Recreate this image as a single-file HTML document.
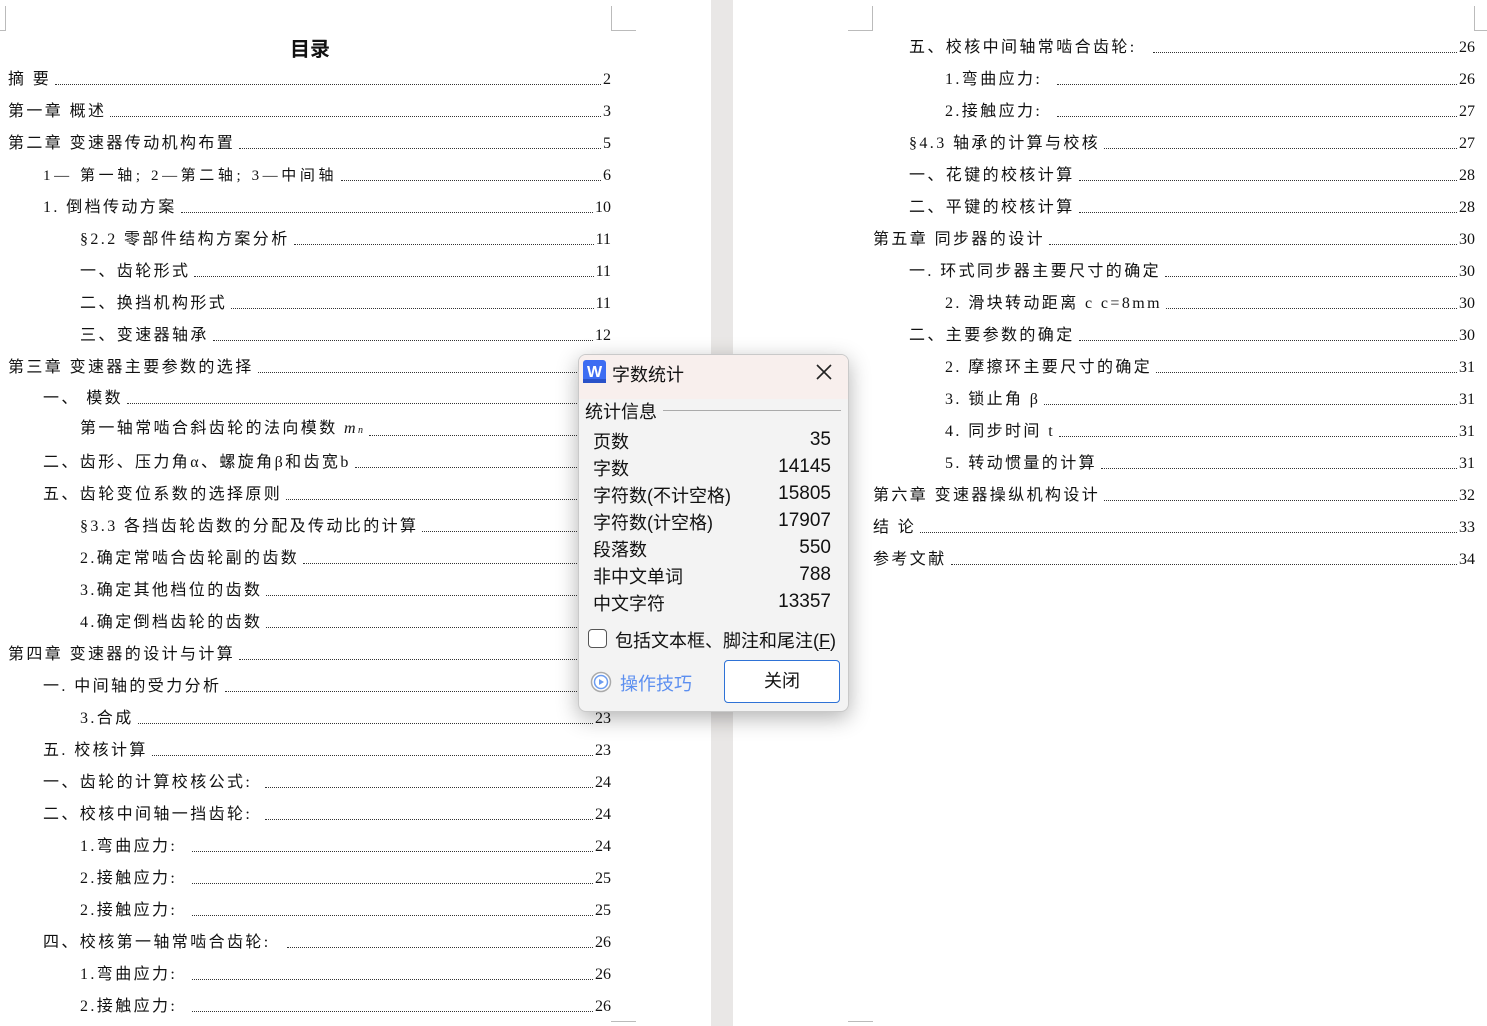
<!DOCTYPE html>
<html><head><meta charset="utf-8"><style>
*{margin:0;padding:0;box-sizing:border-box}
body{width:1487px;height:1026px;overflow:hidden;background:#fff;position:relative;font-family:"Liberation Serif","Noto Sans CJK SC",sans-serif;color:#111}
.gap{position:absolute;left:711px;top:0;width:22px;height:1026px;background:#e9e7e6}
.r{position:absolute;height:20px;display:flex;align-items:flex-end;font-size:16px;letter-spacing:2.4px;line-height:20px;white-space:nowrap;margin-top:2px}
.r .t{font-family:"Liberation Serif","Noto Sans CJK SC",sans-serif}
.r .d{flex:1;border-bottom:1px dotted #333;margin:0 2px 5px 4px}
.r .n{letter-spacing:0;font-family:"Liberation Serif",serif}
.mk{position:absolute;background:#bbb}
.title{position:absolute;left:270px;top:33px;width:80px;text-align:center;font-size:20px;font-weight:bold;font-family:"Noto Sans CJK SC",sans-serif}
.dlg{position:absolute;left:578px;top:354px;width:271px;height:358px;background:#f3f3f3;border:1px solid #c9c9c9;border-radius:8px;box-shadow:0 6px 22px rgba(0,0,0,.3);font-family:"Liberation Sans","Noto Sans CJK SC",sans-serif;overflow:hidden}
.tb{height:44px;background:#f8efed;position:relative}
.a{position:absolute;font-size:18px;color:#111;white-space:nowrap}
.v{position:absolute;right:17px;font-size:19px;margin-top:1px}
</style></head><body>
<div class="gap"></div>
<div class="mk" style="left:5px;top:6px;width:1px;height:24px"></div>
<div class="mk" style="left:0;top:30px;width:6px;height:1px"></div>
<div class="mk" style="left:611px;top:6px;width:1px;height:24px"></div>
<div class="mk" style="left:611px;top:30px;width:25px;height:1px"></div>
<div class="mk" style="left:872px;top:6px;width:1px;height:24px"></div>
<div class="mk" style="left:848px;top:30px;width:25px;height:1px"></div>
<div class="mk" style="left:1474px;top:6px;width:1px;height:24px"></div>
<div class="mk" style="left:1474px;top:30px;width:13px;height:1px"></div>
<div class="mk" style="left:611px;top:1021px;width:25px;height:1px"></div>
<div class="mk" style="left:848px;top:1021px;width:25px;height:1px"></div>
<div class="title">目录</div>

<div class="r" style="left:8px;top:68px;width:603px"><span class="t">摘 要</span><span class="d"></span><span class="n">2</span></div>
<div class="r" style="left:8px;top:100px;width:603px"><span class="t">第一章 概述</span><span class="d"></span><span class="n">3</span></div>
<div class="r" style="left:8px;top:132px;width:603px"><span class="t">第二章 变速器传动机构布置</span><span class="d"></span><span class="n">5</span></div>
<div class="r" style="left:43px;top:164px;width:568px;font-size:15px;letter-spacing:3.6px"><span class="t">1— 第一轴; 2—第二轴; 3—中间轴</span><span class="d"></span><span class="n" style="font-size:16px">6</span></div>
<div class="r" style="left:43px;top:196px;width:568px"><span class="t">1.  倒档传动方案</span><span class="d"></span><span class="n">10</span></div>
<div class="r" style="left:80px;top:228px;width:531px"><span class="t">§2.2 零部件结构方案分析</span><span class="d"></span><span class="n">11</span></div>
<div class="r" style="left:80px;top:260px;width:531px"><span class="t">一、齿轮形式</span><span class="d"></span><span class="n">11</span></div>
<div class="r" style="left:80px;top:292px;width:531px"><span class="t">二、换挡机构形式</span><span class="d"></span><span class="n">11</span></div>
<div class="r" style="left:80px;top:324px;width:531px"><span class="t">三、变速器轴承</span><span class="d"></span><span class="n">12</span></div>
<div class="r" style="left:8px;top:356px;width:603px"><span class="t">第三章 变速器主要参数的选择</span><span class="d"></span><span class="n">13</span></div>
<div class="r" style="left:43px;top:387px;width:568px"><span class="t">一、  模数</span><span class="d"></span><span class="n">13</span></div>
<div class="r" style="left:80px;top:419px;width:531px"><span class="t">第一轴常啮合斜齿轮的法向模数 <i>m</i><i style="font-size:10px">n</i></span><span class="d"></span><span class="n">13</span></div>
<div class="r" style="left:43px;top:451px;width:568px"><span class="t">二、齿形、压力角α、螺旋角β和齿宽b</span><span class="d"></span><span class="n">14</span></div>
<div class="r" style="left:43px;top:483px;width:568px"><span class="t">五、齿轮变位系数的选择原则</span><span class="d"></span><span class="n">15</span></div>
<div class="r" style="left:80px;top:515px;width:531px"><span class="t">§3.3 各挡齿轮齿数的分配及传动比的计算</span><span class="d"></span><span class="n">16</span></div>
<div class="r" style="left:80px;top:547px;width:531px"><span class="t">2.确定常啮合齿轮副的齿数</span><span class="d"></span><span class="n">17</span></div>
<div class="r" style="left:80px;top:579px;width:531px"><span class="t">3.确定其他档位的齿数</span><span class="d"></span><span class="n">18</span></div>
<div class="r" style="left:80px;top:611px;width:531px"><span class="t">4.确定倒档齿轮的齿数</span><span class="d"></span><span class="n">19</span></div>
<div class="r" style="left:8px;top:643px;width:603px"><span class="t">第四章 变速器的设计与计算</span><span class="d"></span><span class="n">20</span></div>
<div class="r" style="left:43px;top:675px;width:568px"><span class="t">一.  中间轴的受力分析</span><span class="d"></span><span class="n">21</span></div>
<div class="r" style="left:80px;top:707px;width:531px"><span class="t">3.合成</span><span class="d"></span><span class="n">23</span></div>
<div class="r" style="left:43px;top:739px;width:568px"><span class="t">五. 校核计算</span><span class="d"></span><span class="n">23</span></div>
<div class="r" style="left:43px;top:771px;width:568px"><span class="t" style="width:218px">一、齿轮的计算校核公式:</span><span class="d"></span><span class="n">24</span></div>
<div class="r" style="left:43px;top:803px;width:568px"><span class="t" style="width:218px">二、校核中间轴一挡齿轮:</span><span class="d"></span><span class="n">24</span></div>
<div class="r" style="left:80px;top:835px;width:531px"><span class="t" style="width:108px">1.弯曲应力:</span><span class="d"></span><span class="n">24</span></div>
<div class="r" style="left:80px;top:867px;width:531px"><span class="t" style="width:108px">2.接触应力:</span><span class="d"></span><span class="n">25</span></div>
<div class="r" style="left:80px;top:899px;width:531px"><span class="t" style="width:108px">2.接触应力:</span><span class="d"></span><span class="n">25</span></div>
<div class="r" style="left:43px;top:931px;width:568px"><span class="t" style="width:240px">四、校核第一轴常啮合齿轮:</span><span class="d"></span><span class="n">26</span></div>
<div class="r" style="left:80px;top:963px;width:531px"><span class="t" style="width:108px">1.弯曲应力:</span><span class="d"></span><span class="n">26</span></div>
<div class="r" style="left:80px;top:995px;width:531px"><span class="t" style="width:108px">2.接触应力:</span><span class="d"></span><span class="n">26</span></div>

<div class="r" style="left:909px;top:36px;width:566px"><span class="t" style="width:240px">五、校核中间轴常啮合齿轮:</span><span class="d"></span><span class="n">26</span></div>
<div class="r" style="left:945px;top:68px;width:530px"><span class="t" style="width:108px">1.弯曲应力:</span><span class="d"></span><span class="n">26</span></div>
<div class="r" style="left:945px;top:100px;width:530px"><span class="t" style="width:108px">2.接触应力:</span><span class="d"></span><span class="n">27</span></div>
<div class="r" style="left:909px;top:132px;width:566px"><span class="t">§4.3 轴承的计算与校核</span><span class="d"></span><span class="n">27</span></div>
<div class="r" style="left:909px;top:164px;width:566px"><span class="t">一、花键的校核计算</span><span class="d"></span><span class="n">28</span></div>
<div class="r" style="left:909px;top:196px;width:566px"><span class="t">二、平键的校核计算</span><span class="d"></span><span class="n">28</span></div>
<div class="r" style="left:873px;top:228px;width:602px"><span class="t">第五章 同步器的设计</span><span class="d"></span><span class="n">30</span></div>
<div class="r" style="left:909px;top:260px;width:566px"><span class="t">一.  环式同步器主要尺寸的确定</span><span class="d"></span><span class="n">30</span></div>
<div class="r" style="left:945px;top:292px;width:530px"><span class="t">2.  滑块转动距离 c c=8mm</span><span class="d"></span><span class="n">30</span></div>
<div class="r" style="left:909px;top:324px;width:566px"><span class="t">二、主要参数的确定</span><span class="d"></span><span class="n">30</span></div>
<div class="r" style="left:945px;top:356px;width:530px"><span class="t">2.  摩擦环主要尺寸的确定</span><span class="d"></span><span class="n">31</span></div>
<div class="r" style="left:945px;top:388px;width:530px"><span class="t">3.  锁止角 β</span><span class="d"></span><span class="n">31</span></div>
<div class="r" style="left:945px;top:420px;width:530px"><span class="t">4.  同步时间 t</span><span class="d"></span><span class="n">31</span></div>
<div class="r" style="left:945px;top:452px;width:530px"><span class="t">5.  转动惯量的计算</span><span class="d"></span><span class="n">31</span></div>
<div class="r" style="left:873px;top:484px;width:602px"><span class="t">第六章 变速器操纵机构设计</span><span class="d"></span><span class="n">32</span></div>
<div class="r" style="left:873px;top:516px;width:602px"><span class="t">结 论</span><span class="d"></span><span class="n">33</span></div>
<div class="r" style="left:873px;top:548px;width:602px"><span class="t">参考文献</span><span class="d"></span><span class="n">34</span></div>

<div class="dlg">
 <div class="tb">
  <svg style="position:absolute;left:4px;top:5px" width="23" height="23" viewBox="0 0 23 23"><rect width="23" height="23" rx="3" fill="#3d6cf2"/><rect y="19" width="23" height="4" fill="#2a52c9"/><text x="11.5" y="17" text-anchor="middle" font-family="Liberation Sans" font-weight="bold" font-size="16" fill="#fff">W</text></svg>
  <div class="a" style="left:33px;top:6px">字数统计</div>
  <svg style="position:absolute;left:237px;top:9px" width="16" height="16" viewBox="0 0 16 16"><path d="M1 1L15 15M15 1L1 15" stroke="#222" stroke-width="1.6"/></svg>
 </div>
 <div class="a" style="left:6px;top:43px">统计信息</div>
 <div style="position:absolute;left:84px;top:55px;width:178px;height:1px;background:#aaa"></div>
 <div class="a" style="left:14px;top:73px">页数</div><div class="v" style="top:73px">35</div>
 <div class="a" style="left:14px;top:100px">字数</div><div class="v" style="top:100px">14145</div>
 <div class="a" style="left:14px;top:127px">字符数(不计空格)</div><div class="v" style="top:127px">15805</div>
 <div class="a" style="left:14px;top:154px">字符数(计空格)</div><div class="v" style="top:154px">17907</div>
 <div class="a" style="left:14px;top:181px">段落数</div><div class="v" style="top:181px">550</div>
 <div class="a" style="left:14px;top:208px">非中文单词</div><div class="v" style="top:208px">788</div>
 <div class="a" style="left:14px;top:235px">中文字符</div><div class="v" style="top:235px">13357</div>
 <div style="position:absolute;left:9px;top:274px;width:19px;height:19px;border:1.5px solid #555;border-radius:4px;background:#fff"></div>
 <div class="a" style="left:36px;top:272px">包括文本框、脚注和尾注(<u>F</u>)</div>
 <svg style="position:absolute;left:11px;top:316px" width="22" height="22" viewBox="0 0 22 22"><circle cx="11" cy="11" r="9.5" fill="#fff" stroke="#aaa" stroke-width="1.5"/><circle cx="11" cy="11" r="6.5" fill="none" stroke="#6b9cf0" stroke-width="1.5"/><path d="M9 8L14 11L9 14Z" fill="#6b9cf0"/></svg>
 <div class="a" style="left:41px;top:315px;color:#5c8ff0">操作技巧</div>
 <div style="position:absolute;left:145px;top:305px;width:116px;height:43px;border:1px solid #2e72d6;border-radius:4px;background:#fff;text-align:center;line-height:41px;font-size:18px">关闭</div>
</div>
</body></html>
